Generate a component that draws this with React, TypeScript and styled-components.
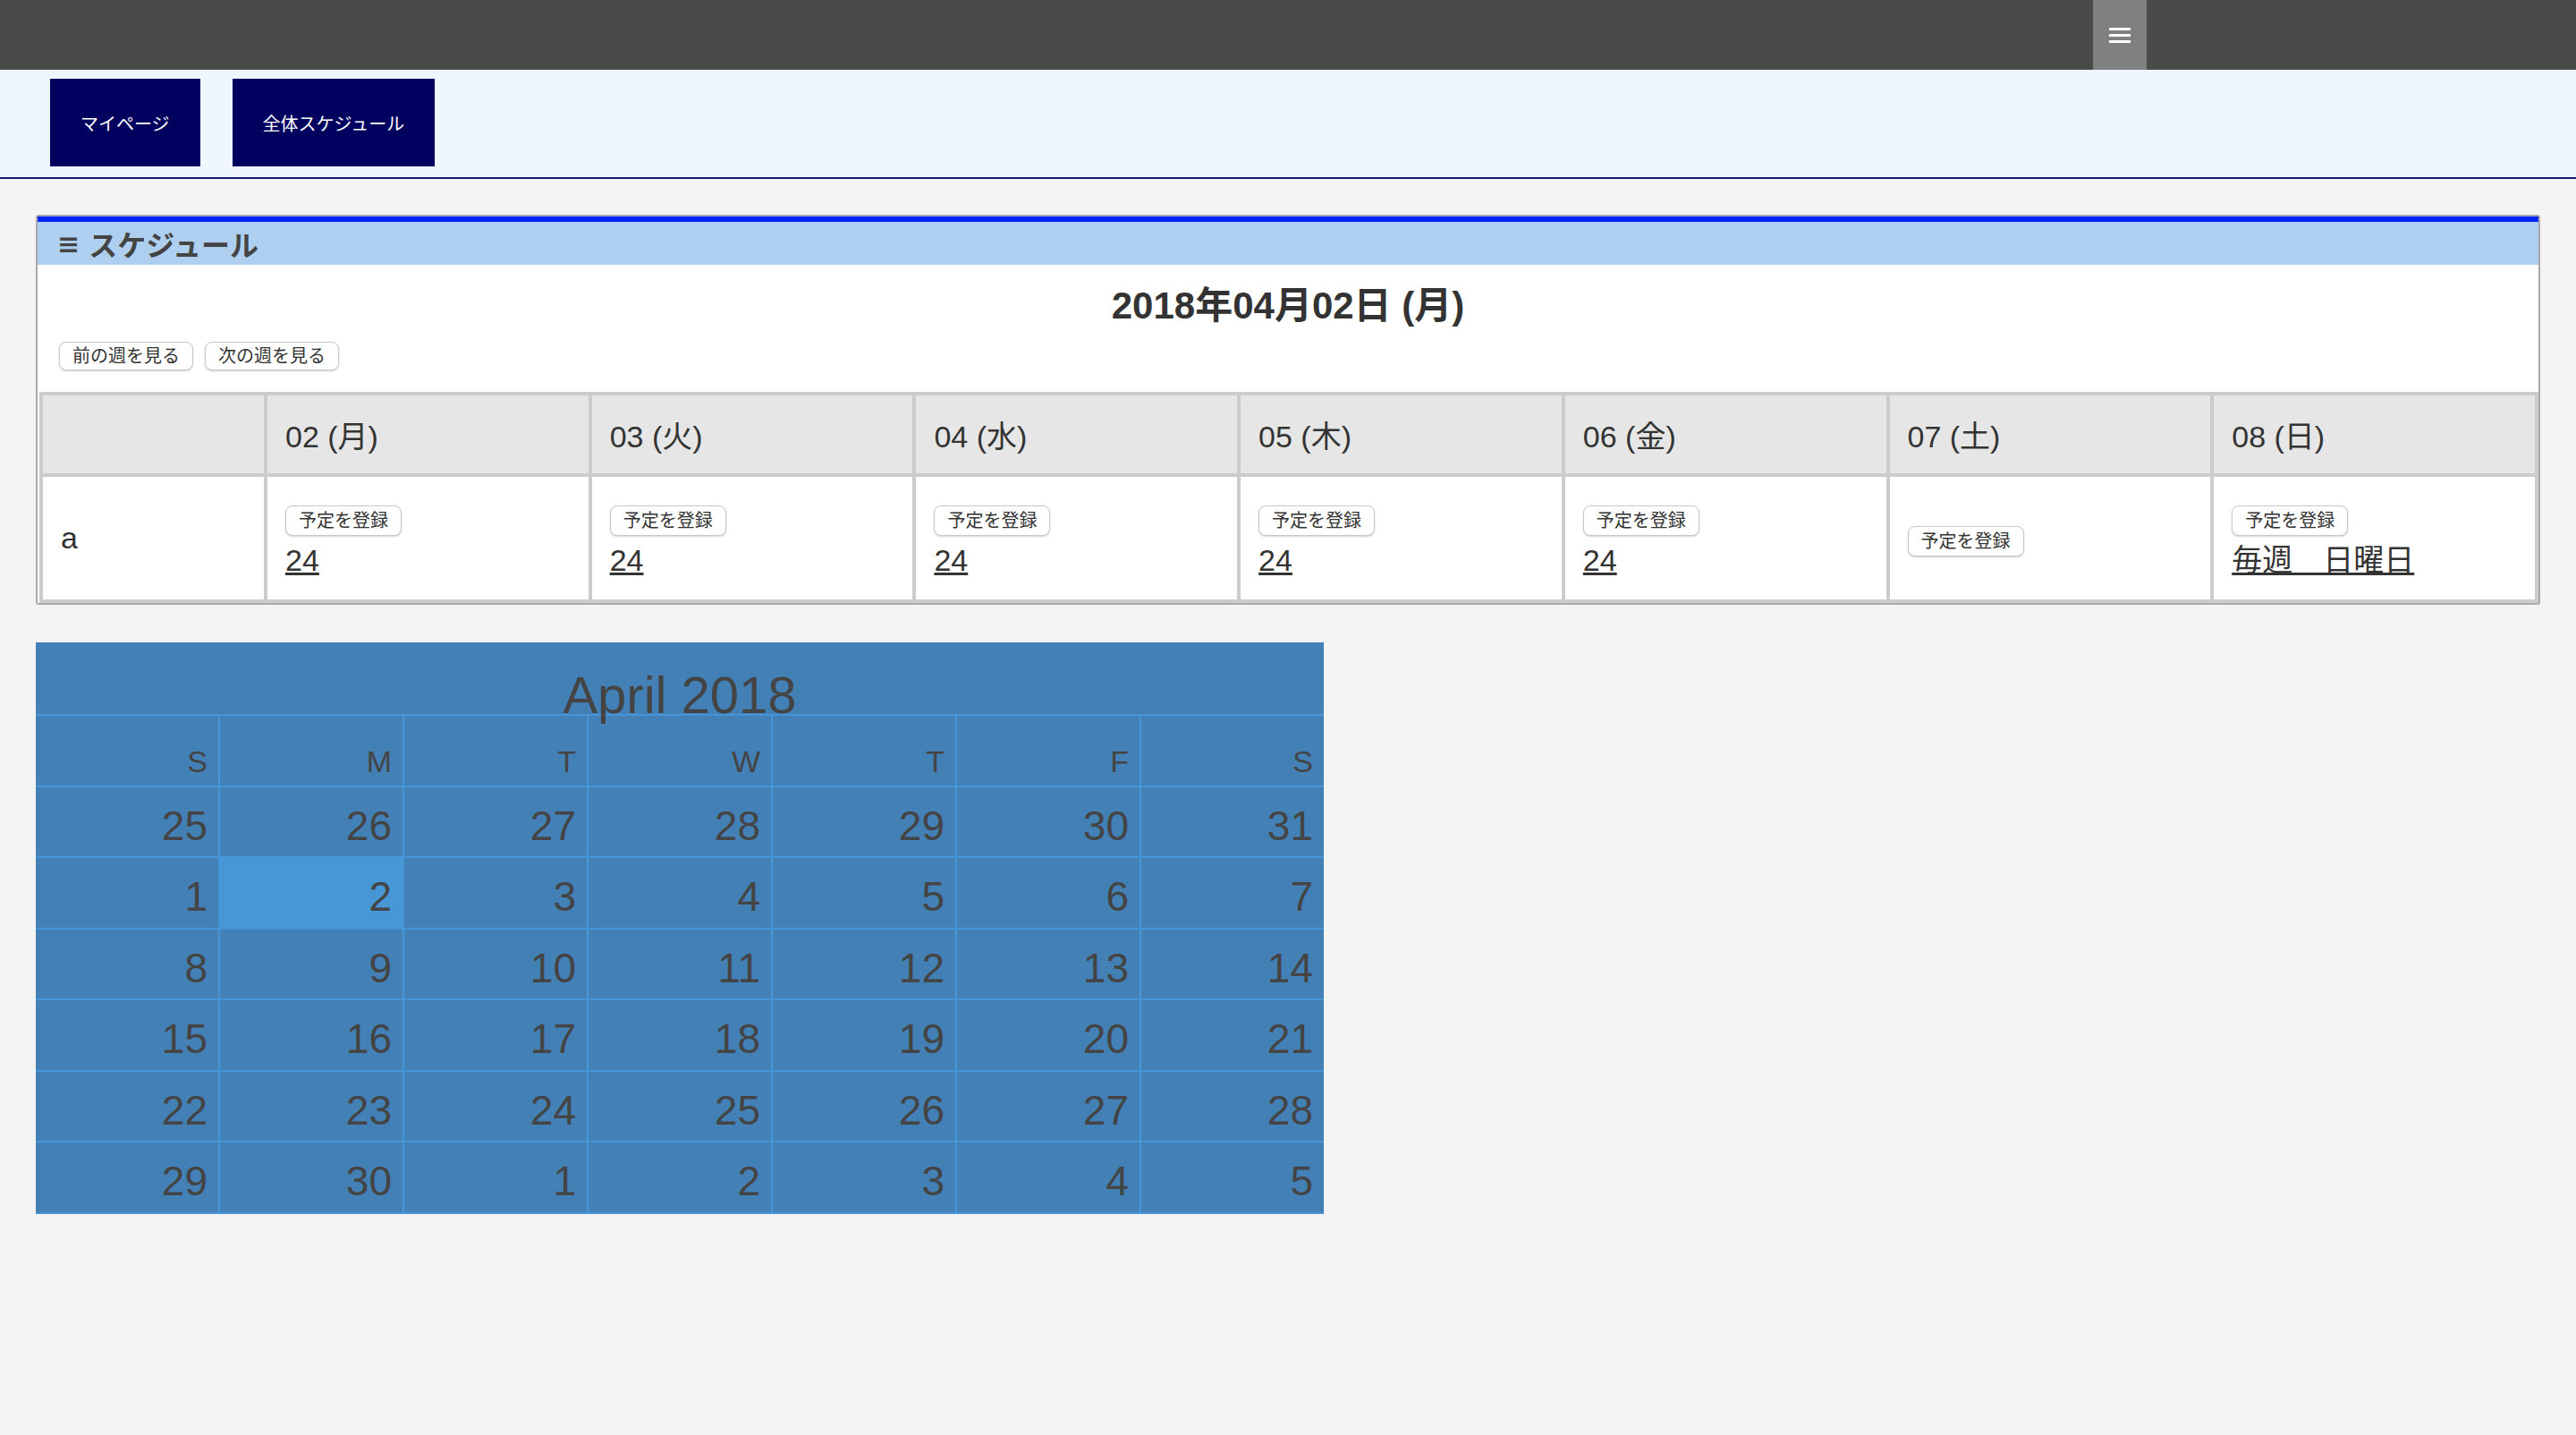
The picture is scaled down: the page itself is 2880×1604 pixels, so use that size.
import React from 'react';
import styled, { createGlobalStyle } from 'styled-components';

const GlobalStyle = createGlobalStyle`
  html, body {
    margin: 0;
    padding: 0;
    background: #f4f4f4;
  }
  body {
    font-family: "Liberation Sans", "Noto Sans CJK JP", sans-serif;
    color: #333;
  }
`;

const Page = styled.div`
  min-height: 1604px;
  background: #f4f4f4;
`;

const TopBar = styled.header`
  height: 78px;
  background: #4a4a4a;
  display: flex;
  justify-content: flex-end;
  padding-right: 480px;
`;

const MenuButton = styled.button`
  width: 60px;
  height: 78px;
  border: none;
  padding: 0;
  background: #808080;
  display: flex;
  align-items: center;
  justify-content: center;
  cursor: pointer;
`;

const NavBar = styled.nav`
  height: 122px;
  box-sizing: border-box;
  background: #eff6fe;
  border-bottom: 2px solid #1b1b6b;
  display: flex;
  align-items: flex-start;
  gap: 36px;
  padding: 10px 0 0 56px;
`;

const NavButton = styled.a`
  height: 98px;
  padding: 0 34px;
  background: #00005e;
  color: #fff;
  font-size: 20px;
  display: flex;
  align-items: center;
  text-decoration: none;
`;

const Main = styled.main`
  padding: 40px 40px 0;
`;

const Panel = styled.section`
  width: 2800px;
  box-sizing: border-box;
  border: 2px solid #aaa;
  border-radius: 3px;
  background: #fff;
`;

const PanelHeader = styled.h2`
  margin: 0;
  height: 48px;
  border-top: 6px solid #0022ff;
  background: #aecff0;
  padding-left: 22px;
  display: flex;
  align-items: center;
  gap: 10px;
  font-size: 32px;
  font-weight: bold;
  color: #444;
`;

const HeaderMark = styled.span`
  font-family: "DejaVu Sans", sans-serif;
  font-size: 30px;
  font-weight: bold;
`;

const DateTitle = styled.div`
  margin-top: 21px;
  text-align: center;
  font-size: 42px;
  line-height: 50px;
  font-weight: bold;
  color: #333;
`;

const WeekNav = styled.div`
  display: flex;
  gap: 13px;
  padding-left: 24px;
  margin-top: 15px;
`;

const SmallButton = styled.button<{ $tall?: boolean }>`
  font-family: "Liberation Sans", "Noto Sans CJK JP", sans-serif;
  font-size: 20px;
  line-height: 24px;
  padding: ${p => (p.$tall ? '4px 14px' : '3px 14px')};
  color: #333;
  background: #fff;
  border: 1px solid #c8c8c8;
  border-radius: 8px;
  box-shadow: 0 1px 2px rgba(0, 0, 0, 0.18);
  cursor: pointer;
`;

const WeekTable = styled.table`
  margin: 24px 0 0 2px;
  width: calc(100% - 2px);
  table-layout: fixed;
  border-collapse: separate;
  border-spacing: 0;
  border-top: 4px solid #ccc;
  border-left: 4px solid #ccc;
`;

const HeadRow = styled.tr`
  height: 91px;
`;

const BodyRow = styled.tr`
  height: 141px;
`;

const Cell = styled.td<{ $head?: boolean; $shift?: boolean }>`
  border-right: 4px solid #ccc;
  border-bottom: 4px solid #ccc;
  padding: ${p => (p.$shift ? '7px 20px 0' : '0 20px')};
  font-size: 34px;
  font-weight: normal;
  text-align: left;
  vertical-align: middle;
  color: #333;
  background: ${p => (p.$head ? '#e6e6e6' : '#fff')};
`;

const CellStack = styled.div`
  display: flex;
  flex-direction: column;
  align-items: flex-start;
  gap: 7px;
`;

const EventLink = styled.a`
  font-size: 34px;
  line-height: 40px;
  color: #333;
  text-decoration: underline;
`;

const Calendar = styled.div`
  margin-top: 42px;
  width: 1440px;
  display: grid;
  grid-template-columns: repeat(7, 1fr);
  grid-template-rows: 80px;
  grid-auto-rows: 77.5px;
  gap: 2px;
  padding-bottom: 2px;
  background: #4695d8;
  color: #444;
`;

const CalTitle = styled.div`
  grid-column: 1 / -1;
  box-sizing: border-box;
  padding-top: 30px;
  font-size: 58px;
  line-height: 58px;
  text-align: center;
  background: #4380b5;
  position: relative;
  z-index: 1;
  max-height: 80px;
`;

const WeekdayCell = styled.div`
  background: #4380b5;
  text-align: right;
  padding: 34px 12px 0 0;
  font-size: 34px;
  line-height: 34px;
`;

const DayCell = styled.div<{ $selected?: boolean }>`
  background: ${p => (p.$selected ? '#4796d6' : '#4380b5')};
  text-align: right;
  padding: 20px 12px 0 0;
  font-size: 46px;
  line-height: 46px;
`;

const days = [
  { label: '02 (月)', event: '24' },
  { label: '03 (火)', event: '24' },
  { label: '04 (水)', event: '24' },
  { label: '05 (木)', event: '24' },
  { label: '06 (金)', event: '24' },
  { label: '07 (土)', event: '' },
  { label: '08 (日)', event: '毎週　日曜日' },
];

const weekdays = ['S', 'M', 'T', 'W', 'T', 'F', 'S'];

const monthDays = [
  25, 26, 27, 28, 29, 30, 31,
  1, 2, 3, 4, 5, 6, 7,
  8, 9, 10, 11, 12, 13, 14,
  15, 16, 17, 18, 19, 20, 21,
  22, 23, 24, 25, 26, 27, 28,
  29, 30, 1, 2, 3, 4, 5,
];

const MenuIcon = () => (
  <svg width="24" height="17" viewBox="0 0 24 17">
    <rect x="0" y="0" width="24" height="3" fill="#fff" />
    <rect x="0" y="7" width="24" height="3" fill="#fff" />
    <rect x="0" y="14" width="24" height="3" fill="#fff" />
  </svg>
);

export default function App() {
  return (
    <Page>
      <GlobalStyle />
      <TopBar>
        <MenuButton aria-label="menu">
          <MenuIcon />
        </MenuButton>
      </TopBar>
      <NavBar>
        <NavButton href="#">マイページ</NavButton>
        <NavButton href="#">全体スケジュール</NavButton>
      </NavBar>
      <Main>
        <Panel>
          <PanelHeader>
            <HeaderMark>≡</HeaderMark>
            スケジュール
          </PanelHeader>
          <DateTitle>2018年04月02日 (月)</DateTitle>
          <WeekNav>
            <SmallButton>前の週を見る</SmallButton>
            <SmallButton>次の週を見る</SmallButton>
          </WeekNav>
          <WeekTable>
            <colgroup>
              <col style={{ width: 251 }} />
              {days.map(d => (
                <col key={d.label} />
              ))}
            </colgroup>
            <thead>
              <HeadRow>
                <Cell as="th" $head />
                {days.map(d => (
                  <Cell as="th" $head key={d.label}>
                    {d.label}
                  </Cell>
                ))}
              </HeadRow>
            </thead>
            <tbody>
              <BodyRow>
                <Cell>a</Cell>
                {days.map(d => (
                  <Cell $shift key={d.label}>
                    <CellStack>
                      <SmallButton $tall>予定を登録</SmallButton>
                      {d.event && <EventLink href="#">{d.event}</EventLink>}
                    </CellStack>
                  </Cell>
                ))}
              </BodyRow>
            </tbody>
          </WeekTable>
        </Panel>
        <Calendar>
          <CalTitle>April 2018</CalTitle>
          {weekdays.map((w, i) => (
            <WeekdayCell key={i}>{w}</WeekdayCell>
          ))}
          {monthDays.map((d, i) => (
            <DayCell key={i} $selected={i === 8}>
              {d}
            </DayCell>
          ))}
        </Calendar>
      </Main>
    </Page>
  );
}
